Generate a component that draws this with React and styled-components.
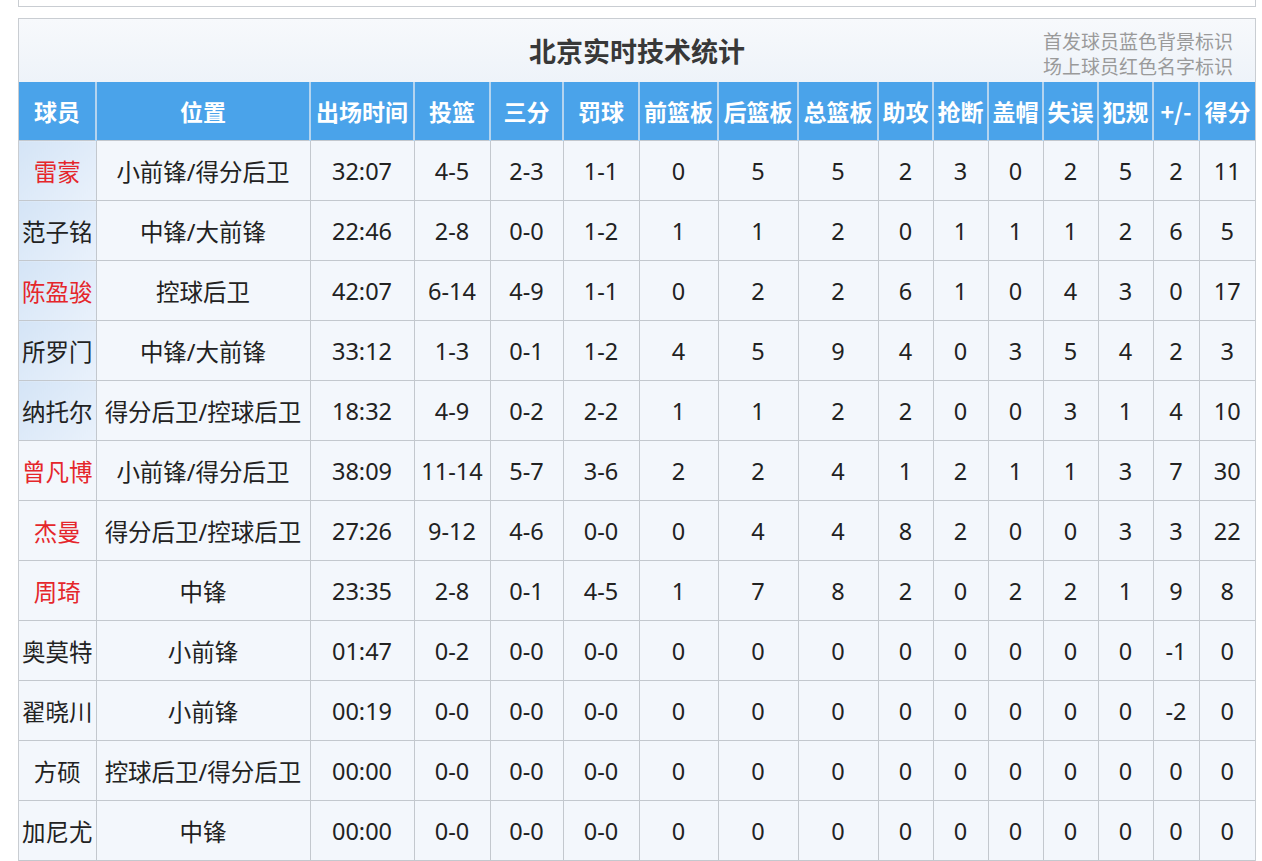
import React from 'react';
import styled, { createGlobalStyle } from 'styled-components';

const GlobalStyle = createGlobalStyle`
  html, body {
    margin: 0;
    padding: 0;
    background: #ffffff;
  }
  body {
    font-family: "Noto Sans", "Noto Sans CJK SC", sans-serif;
    color: #222;
  }
`;

const columns = [
    { key: 'name', label: '球员', width: 77 },
    { key: 'pos', label: '位置', width: 214 },
    { key: 'min', label: '出场时间', width: 104 },
    { key: 'fg', label: '投篮', width: 76 },
    { key: 'tp', label: '三分', width: 73 },
    { key: 'ft', label: '罚球', width: 76 },
    { key: 'or', label: '前篮板', width: 79 },
    { key: 'dr', label: '后篮板', width: 80 },
    { key: 'tr', label: '总篮板', width: 80 },
    { key: 'ast', label: '助攻', width: 55 },
    { key: 'stl', label: '抢断', width: 55 },
    { key: 'blk', label: '盖帽', width: 55 },
    { key: 'to', label: '失误', width: 55 },
    { key: 'pf', label: '犯规', width: 55 },
    { key: 'pm', label: '+/-', width: 46 },
    { key: 'pts', label: '得分', width: 56 },
];

// starter: blue name cell, onCourt: red name
const players = [
    { name: '雷蒙', starter: true, onCourt: true, pos: '小前锋/得分后卫', stats: ['32:07', '4-5', '2-3', '1-1', 0, 5, 5, 2, 3, 0, 2, 5, 2, 11] },
    { name: '范子铭', starter: true, pos: '中锋/大前锋', stats: ['22:46', '2-8', '0-0', '1-2', 1, 1, 2, 0, 1, 1, 1, 2, 6, 5] },
    { name: '陈盈骏', starter: true, onCourt: true, pos: '控球后卫', stats: ['42:07', '6-14', '4-9', '1-1', 0, 2, 2, 6, 1, 0, 4, 3, 0, 17] },
    { name: '所罗门', starter: true, pos: '中锋/大前锋', stats: ['33:12', '1-3', '0-1', '1-2', 4, 5, 9, 4, 0, 3, 5, 4, 2, 3] },
    { name: '纳托尔', starter: true, pos: '得分后卫/控球后卫', stats: ['18:32', '4-9', '0-2', '2-2', 1, 1, 2, 2, 0, 0, 3, 1, 4, 10] },
    { name: '曾凡博', onCourt: true, pos: '小前锋/得分后卫', stats: ['38:09', '11-14', '5-7', '3-6', 2, 2, 4, 1, 2, 1, 1, 3, 7, 30] },
    { name: '杰曼', onCourt: true, pos: '得分后卫/控球后卫', stats: ['27:26', '9-12', '4-6', '0-0', 0, 4, 4, 8, 2, 0, 0, 3, 3, 22] },
    { name: '周琦', onCourt: true, pos: '中锋', stats: ['23:35', '2-8', '0-1', '4-5', 1, 7, 8, 2, 0, 2, 2, 1, 9, 8] },
    { name: '奥莫特', pos: '小前锋', stats: ['01:47', '0-2', '0-0', '0-0', 0, 0, 0, 0, 0, 0, 0, 0, -1, 0] },
    { name: '翟晓川', pos: '小前锋', stats: ['00:19', '0-0', '0-0', '0-0', 0, 0, 0, 0, 0, 0, 0, 0, -2, 0] },
    { name: '方硕', pos: '控球后卫/得分后卫', stats: ['00:00', '0-0', '0-0', '0-0', 0, 0, 0, 0, 0, 0, 0, 0, 0, 0] },
    { name: '加尼尤', pos: '中锋', stats: ['00:00', '0-0', '0-0', '0-0', 0, 0, 0, 0, 0, 0, 0, 0, 0, 0] },
];

const App = () => {
    return (
        <Page>
            <GlobalStyle />
            <TopBox />
            <Panel>
                <TitleBar>
                    <span />
                    <Title>北京实时技术统计</Title>
                    <Note>
                        首发球员蓝色背景标识
                        <br />
                        场上球员红色名字标识
                    </Note>
                </TitleBar>
                <Table>
                    <colgroup>
                        {columns.map((c) => (
                            <col key={c.key} style={{ width: c.width }} />
                        ))}
                    </colgroup>
                    <thead>
                        <tr>
                            {columns.map((c) => (
                                <HeadCell key={c.key}>{c.label}</HeadCell>
                            ))}
                        </tr>
                    </thead>
                    <tbody>
                        {players.map((p) => (
                            <tr key={p.name}>
                                <NameCell $starter={p.starter} $onCourt={p.onCourt}>
                                    {p.name}
                                </NameCell>
                                <Cell>{p.pos}</Cell>
                                {p.stats.map((s, i) => (
                                    <Cell key={i}>{s}</Cell>
                                ))}
                            </tr>
                        ))}
                    </tbody>
                </Table>
            </Panel>
        </Page>
    );
};

const Page = styled.div`
    padding: 0 6px 0 18px;
    width: 1238px;
`;

const TopBox = styled.div`
    height: 6px;
    border: 1px solid #c9cdd2;
    border-top: none;
    background: #fff;
    margin-bottom: 11px;
`;

const Panel = styled.div`
    border: 1px solid #c9cdd2;
    border-bottom: none;
    background: #f3f7fc;
`;

const TitleBar = styled.div`
    display: grid;
    grid-template-columns: 1fr auto 1fr;
    align-items: center;
    height: 63px;
    background: linear-gradient(#f7f9fc, #eef3f9);
`;

const Title = styled.div`
    font-family: "Noto Sans CJK SC", sans-serif;
    font-size: 27px;
    font-weight: 700;
    color: #383838;
    margin-top: -1px;
`;

const Note = styled.div`
    justify-self: end;
    margin-right: 22px;
    margin-top: 4px;
    font-family: "Noto Sans CJK SC", sans-serif;
    font-size: 19px;
    line-height: 25px;
    color: #9a9a9a;
    text-align: left;
`;

const Table = styled.table`
    width: 100%;
    table-layout: fixed;
    border-collapse: collapse;
`;

const HeadCell = styled.th`
    height: 58px;
    padding: 0;
    background: #4aa3ea;
    color: #fff;
    font-family: "Noto Sans CJK SC", sans-serif;
    font-size: 23px;
    font-weight: 700;
    text-align: center;
    white-space: nowrap;
    overflow: hidden;
    border-left: 2px solid #b4d4ef;
    &:first-child {
        border-left: none;
    }
`;

const Cell = styled.td`
    height: 59px;
    padding: 0;
    border: 1.5px solid #c3c8ce;
    background: #f3f7fc;
    font-family: "Noto Sans", "Noto Sans CJK SC", sans-serif;
    font-size: 23.5px;
    color: #222;
    text-align: center;
    white-space: nowrap;
    overflow: hidden;
    &:last-child {
        border-right: none;
    }
`;

const NameCell = styled(Cell)`
    border-left: none;
    font-family: "Noto Sans CJK SC", sans-serif;
    color: ${(p) => (p.$onCourt ? '#e5262b' : '#222')};
    background: ${(p) =>
        p.$starter ? 'linear-gradient(135deg, #d4e4f6, #e9f1fb)' : '#f3f7fc'};
`;

export default App;
